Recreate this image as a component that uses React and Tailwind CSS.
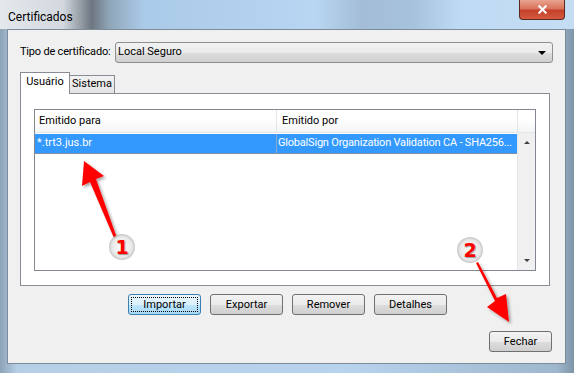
import { X } from "lucide-react";

const font = "font-['Roboto','Liberation_Sans',sans-serif]";

function WinButton({ children, focused, className = "" }) {
  return (
    <button
      className={`h-[21px] rounded-[3px] border text-[11px] leading-none text-black ${
        focused
          ? "border-[#3c7fb1] bg-[linear-gradient(#eaf6fd_0%,#d9f0fc_50%,#bee6fd_51%,#a7d9f5_100%)] p-[2px]"
          : "border-[#707070] bg-[linear-gradient(#f2f2f2_0%,#ebebeb_50%,#dddddd_51%,#cfcfcf_100%)]"
      } ${className}`}
    >
      {focused ? (
        <span className="flex h-full w-full items-center justify-center border border-dotted border-black">
          {children}
        </span>
      ) : (
        children
      )}
    </button>
  );
}

function Marker({ n, className }) {
  return (
    <div
      className={`absolute flex h-[26px] w-[26px] items-center justify-center rounded-full bg-[radial-gradient(circle,#ffffff_0%,#e8e8e8_55%,rgba(160,160,160,0.7)_75%,rgba(160,160,160,0)_100%)] ${className}`}
    >
      <span className="font-['DejaVu_Sans',sans-serif] text-[19px] font-bold leading-none text-[#ff0000] [text-shadow:1px_1px_1px_rgba(0,0,0,0.35)]">
        {n}
      </span>
    </div>
  );
}

export default function App() {
  return (
    <div
      className={`relative flex h-[373px] w-[574px] flex-col overflow-hidden whitespace-nowrap bg-[linear-gradient(90deg,#8da3b6_0%,#b6cfe6_3%,#b8d3ee_60%,#9fb7cd_97%,#7f95a8_100%)] ${font}`}
    >
      {/* Title bar */}
      <div className="flex h-[29px] shrink-0 items-start bg-[linear-gradient(90deg,#e3e8ec_0%,#d2d8de_11%,#6d7680_16%,#8fa5b8_19%,#aacae9_25%,#b8d6f2_55%,#a3bdd6_63%,#a7c2dc_72%,#bfdaf4_80%,#c4ddf3_100%)]">
        <span className="mt-[8px] pl-[8px] text-[12px] text-black">Certificados</span>
        <div className="ml-auto mr-[9px] flex h-[20px] w-[46px] items-center justify-center rounded-b-[4px] border border-t-0 border-[#5a2a22] bg-[linear-gradient(#e8a490_0%,#d9735c_45%,#c4402a_55%,#d45a3e_100%)]">
          <X className="h-[13px] w-[13px] text-white" strokeWidth={4} />
        </div>
      </div>

      {/* Dialog body */}
      <div className="ml-[7px] mr-[8px] flex h-[335px] flex-col border border-[#7d8c9b] bg-[#f0f0f0] text-[11px]">
        <div className="mt-[12px] flex items-center pl-[12px] pr-[12px]">
          <span className="w-[95px] shrink-0 tracking-[-0.2px] text-black">Tipo de certificado:</span>
          <div className="flex h-[21px] flex-1 items-center rounded-[3px] border border-[#8e8f8f] bg-[linear-gradient(#f2f2f2_0%,#ebebeb_50%,#dddddd_51%,#cfcfcf_100%)] pl-[2px] pr-[6px]">
            <span className="flex-1 text-black">Local Seguro</span>
            <span className="h-0 w-0 border-x-[4px] border-t-[4px] border-x-transparent border-t-black" />
          </div>
        </div>

        {/* Tabs */}
        <div className="ml-[12px] mr-[15px] mt-[9px] flex items-end">
          <div className="z-10 -mb-px flex h-[22px] w-[50px] items-center justify-center border border-b-0 border-[#898c95] bg-white pb-[2px] text-black">
            Usuário
          </div>
          <div className="flex h-[18px] w-[45px] items-center justify-center border border-b-0 border-l-0 border-[#898c95] bg-[linear-gradient(#f2f2f2,#e3e3e3)] text-black">
            Sistema
          </div>
        </div>
        <div className="ml-[12px] mr-[15px] flex h-[193px] flex-col border border-[#898c95] bg-white px-[13px] pb-[14px] pt-[15px]">
          <div className="flex flex-1 flex-col border border-[#828790] bg-white">
            <div className="flex h-[23px] border-b border-[#e6e6e6] bg-[linear-gradient(#ffffff_0%,#ffffff_40%,#f4f5f6_100%)] text-black">
              <div className="flex w-[242px] items-center border-r border-[#e3e5e8] pl-[4px]">Emitido para</div>
              <div className="flex w-[241px] items-center border-r border-[#e3e5e8] pl-[5px]">Emitido por</div>
            </div>
            <div className="flex flex-1">
              <div className="min-w-0 flex-1">
                <div className="mt-px flex h-[20px] border-b border-[#7c8fa3] bg-[#3399ff] text-white">
                  <div className="flex w-[242px] shrink-0 items-center border-r border-[#8aa9c8] pl-[2px]">*.trt3.jus.br</div>
                  <div className="flex min-w-0 flex-1 items-center pl-[1px] tracking-[-0.2px]">
                    GlobalSign Organization Validation CA - SHA256...
                  </div>
                </div>
              </div>
              <div className="flex w-[18px] shrink-0 flex-col items-center justify-between border-l border-[#e6e6e6] bg-[#f0f0f0] py-[8px]">
                <span className="h-0 w-0 border-x-[3px] border-b-[3px] border-x-transparent border-b-[#404040]" />
                <span className="h-0 w-0 border-x-[3px] border-t-[3px] border-x-transparent border-t-[#404040]" />
              </div>
            </div>
          </div>
        </div>

        {/* Buttons */}
        <div className="mt-[8px] flex gap-[9px] pl-[120px]">
          <WinButton focused className="w-[73px]">Importar</WinButton>
          <WinButton className="w-[73px]">Exportar</WinButton>
          <WinButton className="w-[73px]">Remover</WinButton>
          <WinButton className="w-[73px]">Detalhes</WinButton>
        </div>
        <div className="mt-[16px] flex justify-end pr-[13px]">
          <WinButton className="w-[63px]">Fechar</WinButton>
        </div>
      </div>

      {/* Annotations */}
      <svg className="pointer-events-none absolute left-0 top-0" width="574" height="373">
        <defs>
          <filter id="sh" x="-30%" y="-30%" width="160%" height="160%">
            <feDropShadow dx="2" dy="2" stdDeviation="1.5" floodColor="#000" floodOpacity="0.35" />
          </filter>
        </defs>
        <g filter="url(#sh)" fill="#ff0000">
          <polygon points="84,161 104,176 96,179 117,238 114,238 90,182 82,186" />
          <polygon points="478,262 497,298 506,294 509,322 487,307 495,301 476,263" />
        </g>
      </svg>
      <Marker n="1" className="left-[109px] top-[234px]" />
      <Marker n="2" className="left-[457px] top-[237px]" />
    </div>
  );
}
